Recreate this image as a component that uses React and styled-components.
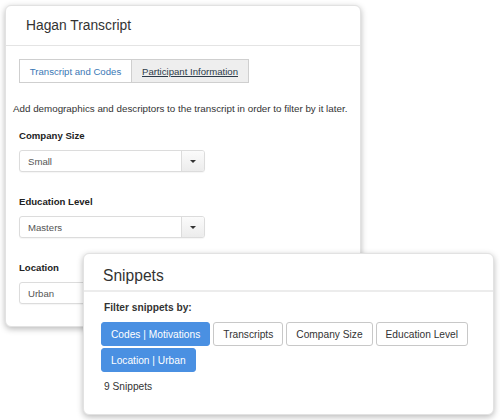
import styled, { createGlobalStyle } from 'styled-components';

const GlobalStyle = createGlobalStyle`
  html, body {
    margin: 0;
    padding: 0;
    background: #fff;
  }
  body {
    font-family: "Liberation Sans", Arial, Helvetica, sans-serif;
    color: #333;
  }
`;

/**
 * Free canvas the two windows sit on.
 */
const Canvas = styled.div`
  position: relative;
  width: 500px;
  height: 420px;
  overflow: hidden;
`;

/**
 * A floating panel. Its place on the canvas is passed in.
 */
const Panel = styled.section`
  position: absolute;
  left: ${({ $left }) => $left}px;
  top: ${({ $top }) => $top}px;
  width: ${({ $width }) => $width}px;
  height: ${({ $height }) => $height}px;
  box-sizing: border-box;
  background: #fff;
  border: 1px solid #e2e2e2;
  border-radius: 6px;
  box-shadow: 0 2px 6px rgba(0, 0, 0, 0.28);
  display: flex;
  flex-direction: column;
  overflow: hidden;
`;

const PanelHeader = styled.header`
  height: ${({ $height }) => $height}px;
  box-sizing: border-box;
  display: flex;
  align-items: center;
  padding-left: ${({ $pad }) => $pad}px;
  border-bottom: ${({ $thick }) => ($thick ? '2px solid #ececec' : '1px solid #e4e4e4')};
  flex-shrink: 0;
`;

const Title = styled.h2`
  margin: 0;
  font-weight: normal;
  font-size: ${({ $size }) => $size}px;
  color: #333;
  padding-top: ${({ $nudge }) => $nudge || 0}px;
`;

const TranscriptBody = styled.div`
  padding: 13px 7px 0;
  font-size: 9.8px;
  display: flex;
  flex-direction: column;
`;

const Tabs = styled.div`
  display: flex;
  margin-left: 6px;
`;

const Tab = styled.button`
  height: 24px;
  box-sizing: border-box;
  padding: 0;
  white-space: nowrap;
  font-family: inherit;
  font-size: 9.6px;
  border: 1px solid #cfcfcf;
  margin-left: ${({ $first }) => ($first ? 0 : -1)}px;
  background: ${({ $active }) => ($active ? '#fff' : '#eeeeee')};
  color: ${({ $active }) => ($active ? '#3a78b5' : '#2d3b4a')};
  text-decoration: ${({ $active }) => ($active ? 'none' : 'underline')};
  width: ${({ $width }) => $width}px;
  cursor: pointer;
`;

const Intro = styled.p`
  margin: 19px 0 0;
  line-height: 13px;
  color: #333;
`;

const Field = styled.div`
  margin-left: 6px;
  margin-top: ${({ $first }) => ($first ? 15 : 24)}px;
  display: flex;
  flex-direction: column;
`;

const Label = styled.label`
  font-weight: bold;
  font-size: 9.6px;
  line-height: 12px;
  color: #222;
  margin-bottom: 8px;
`;

const Select = styled.div`
  width: 186px;
  height: 22px;
  box-sizing: border-box;
  border: 1px solid #dcdcdc;
  border-radius: 3px;
  display: flex;
  align-items: stretch;
  background: #fff;
  box-shadow: 0 1px 1px rgba(0, 0, 0, 0.04);
`;

const SelectValue = styled.span`
  flex: 1;
  display: flex;
  align-items: center;
  padding-left: 8px;
  color: #555;
  font-size: 9.6px;
`;

const SelectToggle = styled.span`
  width: 22px;
  border-left: 1px solid #dcdcdc;
  background: linear-gradient(#fbfbfb, #ececec);
  display: flex;
  align-items: center;
  justify-content: center;
  border-radius: 0 2px 2px 0;
`;

const Caret = styled.span`
  width: 0;
  height: 0;
  border-left: 3px solid transparent;
  border-right: 3px solid transparent;
  border-top: 3px solid #333;
`;

const SnippetBody = styled.div`
  padding: 10px 17px 0;
  font-size: 10.2px;
  display: flex;
  flex-direction: column;
`;

const FilterLabel = styled.div`
  font-weight: bold;
  color: #333;
  padding-left: 3px;
  line-height: 12px;
`;

const Chips = styled.div`
  display: flex;
  flex-wrap: wrap;
  gap: 2px 3px;
  margin-top: 8px;
`;

const Chip = styled.button`
  height: 24px;
  box-sizing: border-box;
  padding: 0 9px;
  font-family: inherit;
  font-size: 10.2px;
  border-radius: 3px;
  border: 1px solid ${({ $on }) => ($on ? '#4a90e2' : '#c8c8c8')};
  background: ${({ $on }) => ($on ? '#4a90e2' : '#fff')};
  color: ${({ $on }) => ($on ? '#fff' : '#333')};
  cursor: pointer;
`;

const Count = styled.div`
  margin-top: 9px;
  padding-left: 3px;
  color: #333;
  line-height: 12px;
`;

const fields = [
  { label: 'Company Size', value: 'Small' },
  { label: 'Education Level', value: 'Masters' },
  { label: 'Location', value: 'Urban' },
];

const filters = [
  { text: 'Codes | Motivations', on: true },
  { text: 'Transcripts' },
  { text: 'Company Size' },
  { text: 'Education Level' },
  { text: 'Location | Urban', on: true },
];

export default function App() {
  return (
    <>
      <GlobalStyle />
      <Canvas>
        <Panel $left={5} $top={5} $width={356} $height={322}>
          <PanelHeader $height={40} $pad={20}>
            <Title $size={13.8}>Hagan Transcript</Title>
          </PanelHeader>
          <TranscriptBody>
            <Tabs>
              <Tab $first $active $width={113}>
                Transcript and Codes
              </Tab>
              <Tab $width={118}>Participant Information</Tab>
            </Tabs>
            <Intro>
              Add demographics and descriptors to the transcript in order to filter by it later.
            </Intro>
            {fields.map((f, i) => (
              <Field key={f.label} $first={i === 0}>
                <Label>{f.label}</Label>
                <Select>
                  <SelectValue>{f.value}</SelectValue>
                  <SelectToggle>
                    <Caret />
                  </SelectToggle>
                </Select>
              </Field>
            ))}
          </TranscriptBody>
        </Panel>

        <Panel $left={83} $top={253} $width={411} $height={162}>
          <PanelHeader $height={38} $pad={19} $thick>
            <Title $size={15.6} $nudge={8}>Snippets</Title>
          </PanelHeader>
          <SnippetBody>
            <FilterLabel>Filter snippets by:</FilterLabel>
            <Chips>
              {filters.map((f) => (
                <Chip key={f.text} $on={f.on}>
                  {f.text}
                </Chip>
              ))}
            </Chips>
            <Count>9 Snippets</Count>
          </SnippetBody>
        </Panel>
      </Canvas>
    </>
  );
}
